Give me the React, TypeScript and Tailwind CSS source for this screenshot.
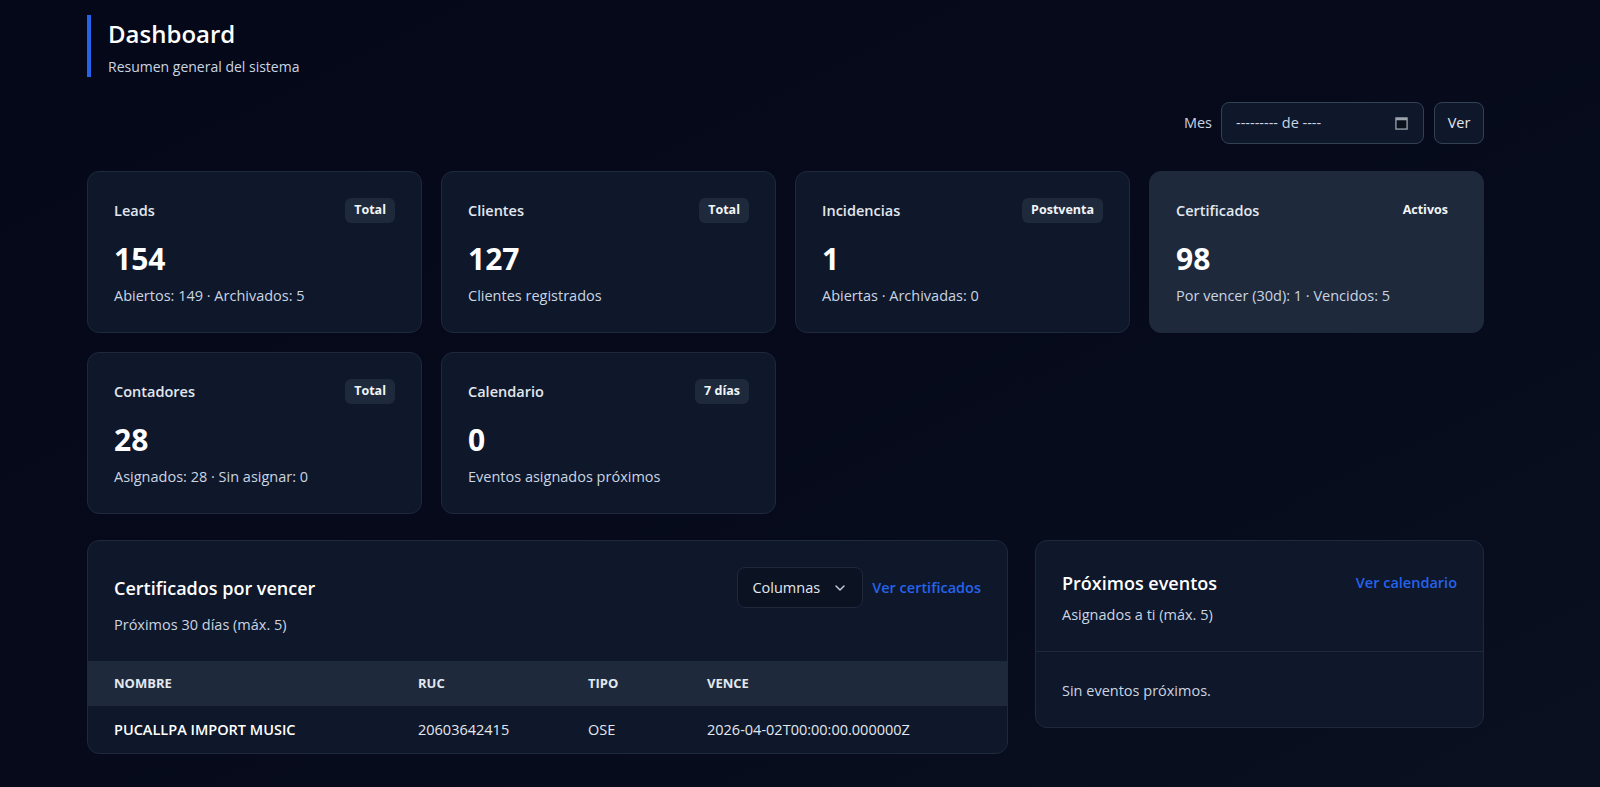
import { ChevronDown } from "lucide-react";

const stats = [
  { title: "Leads", badge: "Total", value: "154", sub: "Abiertos: 149 · Archivados: 5" },
  { title: "Clientes", badge: "Total", value: "127", sub: "Clientes registrados" },
  { title: "Incidencias", badge: "Postventa", value: "1", sub: "Abiertas · Archivadas: 0" },
  { title: "Certificados", badge: "Activos", value: "98", sub: "Por vencer (30d): 1 · Vencidos: 5", active: true },
  { title: "Contadores", badge: "Total", value: "28", sub: "Asignados: 28 · Sin asignar: 0" },
  { title: "Calendario", badge: "7 días", value: "0", sub: "Eventos asignados próximos" },
];

function StatCard({ s }: { s: (typeof stats)[number] }) {
  return (
    <div
      className={`rounded-xl border border-[#1e293b] px-[26px] pt-[26px] pb-[26px] ${
        s.active ? "bg-[#1e293b]" : "bg-[#0f172a]"
      }`}>
      <div className="flex h-[25px] items-center justify-between">
        <span className="text-[14.5px] font-semibold text-slate-200">{s.title}</span>
        <span className="flex h-[25px] items-center rounded-md bg-[#1e293b] px-[9px] text-[12.5px] font-bold text-slate-100">
          {s.badge}
        </span>
      </div>
      <div className="mt-[18px] text-[30px] font-bold leading-9 text-white">{s.value}</div>
      <div className="mt-[9px] text-[14.5px] leading-5 text-slate-300">{s.sub}</div>
    </div>
  );
}

export default function App() {
  return (
    <div
      className="min-h-screen bg-gradient-to-br from-[#050818] via-[#060a1a] to-[#0a1020] text-slate-100"
      style={{ fontFamily: '"Open Sans", "Noto Sans", sans-serif' }}>
      <div className="ml-[87px] w-[1397px] pt-[15px]">
        <header className="border-l-4 border-[#2563eb] pl-[17px]">
          <h1 className="text-[24px] font-semibold leading-[38px] text-white">Dashboard</h1>
          <p className="mt-[4px] text-sm leading-5 text-slate-300">Resumen general del sistema</p>
        </header>

        <div className="mt-[25px] flex items-center justify-end gap-[9px]">
          <span className="text-[14.5px] text-slate-300">Mes</span>
          <div className="flex h-[42px] w-[203px] items-center justify-between rounded-lg border border-[#334155] bg-[#0f172a] pl-[14px] pr-[15px] text-[14.5px] text-slate-300">
            <span>--------- de ----</span>
            <svg viewBox="0 0 14 14" className="h-[13px] w-[13px]">
              <rect x="1" y="1" width="12" height="12" fill="#0a0f1c" stroke="#9ca3af" strokeWidth="1.4" />
              <rect x="1" y="1" width="12" height="2.5" fill="#9ca3af" />
            </svg>
          </div>
          <button className="ml-[1px] h-[42px] w-[50px] rounded-lg border border-[#334155] bg-[#0f172a] text-[14.5px] text-slate-200">
            Ver
          </button>
        </div>

        <div className="mt-[27px] grid grid-cols-4 gap-x-[19px] gap-y-[19px]">
          {stats.map((s) => (
            <StatCard key={s.title} s={s} />
          ))}
        </div>

        <div className="mt-[26px] grid grid-cols-[921px_1fr] items-start gap-[27px]">
          <section className="overflow-hidden rounded-xl border border-[#1e293b] bg-[#0f172a]">
            <div className="px-[26px] pt-[26px] pb-[26px]">
              <div className="flex h-[41px] items-center justify-between">
                <h2 className="text-[18px] font-semibold leading-7 text-white">Certificados por vencer</h2>
                <div className="flex items-center gap-[9px]">
                  <button className="flex h-[41px] items-center gap-3 rounded-lg border border-[#1e293b] bg-[#0b1222] px-[14px] text-[14.5px] text-slate-200">
                    Columnas
                    <ChevronDown className="h-4 w-4 text-slate-300" />
                  </button>
                  <a className="text-[14.5px] font-semibold text-[#2563eb]">Ver certificados</a>
                </div>
              </div>
              <p className="mt-[7px] text-[14.5px] leading-5 text-slate-300">Próximos 30 días (máx. 5)</p>
            </div>
            <table className="w-full text-left">
              <thead className="bg-[#1e293b]">
                <tr className="h-[45px] text-[13px] font-bold uppercase text-slate-200">
                  <th className="w-[330px] pl-[26px]">Nombre</th>
                  <th className="w-[170px]">Ruc</th>
                  <th className="w-[119px]">Tipo</th>
                  <th>Vence</th>
                </tr>
              </thead>
              <tbody>
                <tr className="h-[47px] text-[14.5px] text-slate-200">
                  <td className="pl-[26px] font-semibold text-white">PUCALLPA IMPORT MUSIC</td>
                  <td>20603642415</td>
                  <td>OSE</td>
                  <td>2026-04-02T00:00:00.000000Z</td>
                </tr>
              </tbody>
            </table>
          </section>

          <section className="rounded-xl border border-[#1e293b] bg-[#0f172a]">
            <div className="border-b border-[#1e293b] px-[26px] pt-[28px] pb-[26px]">
              <div className="flex h-7 items-center justify-between">
                <h2 className="text-[18px] font-semibold leading-7 text-white">Próximos eventos</h2>
                <a className="text-[14.5px] font-semibold text-[#2563eb]">Ver calendario</a>
              </div>
              <p className="mt-2 text-[14.5px] leading-5 text-slate-300">Asignados a ti (máx. 5)</p>
            </div>
            <div className="px-[26px] pt-[29px] pb-[26px] text-[14.5px] leading-5 text-slate-300">
              Sin eventos próximos.
            </div>
          </section>
        </div>
      </div>
    </div>
  );
}
